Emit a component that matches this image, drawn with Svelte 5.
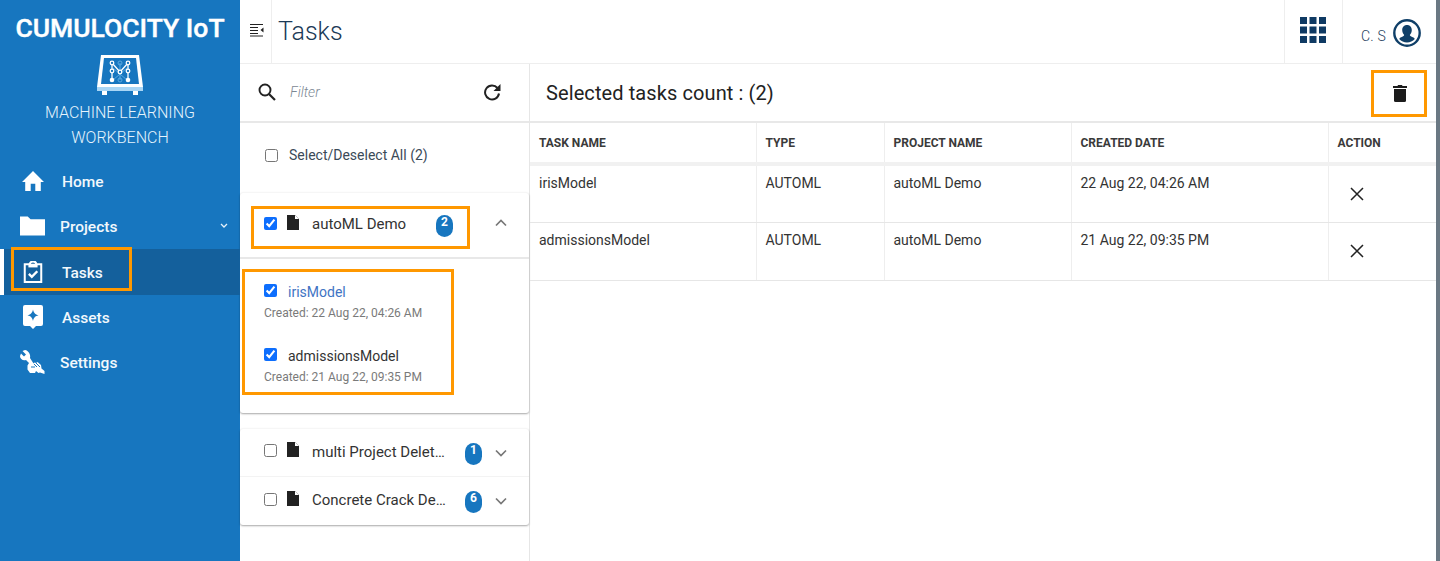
<script>
  const nav = [
    { label: 'Home', icon: 'home' },
    { label: 'Projects', icon: 'folder', caret: true },
    { label: 'Tasks', icon: 'task', active: true },
    { label: 'Assets', icon: 'asset' },
    { label: 'Settings', icon: 'tools' }
  ];
  const rows = [
    { name: 'irisModel', type: 'AUTOML', project: 'autoML Demo', date: '22 Aug 22, 04:26 AM' },
    { name: 'admissionsModel', type: 'AUTOML', project: 'autoML Demo', date: '21 Aug 22, 09:35 PM' }
  ];
</script>

<div class="shell">
  <aside class="side">
    <div class="brand">CUMULOCITY IoT</div>
    <svg class="logo" viewBox="0 0 48 42" width="48" height="42" aria-hidden="true">
      <path d="M5 1h38l4 32H1z" fill="#fff"/>
      <path d="M8 4h32l3 26H5z" fill="#1776bf"/>
      <rect x="1" y="33" width="46" height="4" fill="#a9d6f5"/>
      <rect x="6" y="37" width="5" height="4" fill="#fff"/>
      <rect x="37" y="37" width="5" height="4" fill="#fff"/>
      <g stroke="#5aa9e0" stroke-width="1" fill="none">
        <path d="M24 9v17M17 14l14 12M31 14L17 26"/>
        <circle cx="24" cy="9" r="2"/><circle cx="24" cy="26" r="2"/>
      </g>
      <g stroke="#fff" stroke-width="1.3" fill="#1776bf">
        <path d="M16 9v17M32 9v17M16 9l8 9 8-9" fill="none"/>
        <circle cx="16" cy="9" r="1.8"/><circle cx="32" cy="9" r="1.8"/>
        <circle cx="16" cy="17" r="1.8"/><circle cx="32" cy="17" r="1.8"/>
        <circle cx="24" cy="18" r="1.8"/>
      </g>
      <circle cx="16" cy="26" r="2.3" fill="#fff"/><circle cx="32" cy="26" r="2.3" fill="#fff"/>
    </svg>
    <div class="sub">MACHINE LEARNING<br />WORKBENCH</div>
    <nav class="nav">
      {#each nav as n}
        <div class="nav-item" class:active={n.active} class:narrow={n.icon === 'folder' || n.icon === 'tools'}>
          <span class="nav-icon">
            {#if n.icon === 'home'}
              <svg viewBox="0 0 26 24" width="24" height="22"><path d="M13 1 1 13h3.500v10h6v-8h5v8h6V13H25z" fill="#fff"/></svg>
            {:else if n.icon === 'folder'}
              <svg viewBox="0 0 26 20" width="25" height="20"><path d="M0 0h8l3 3h15v17H0z" fill="#fff"/></svg>
            {:else if n.icon === 'task'}
              <svg class="shift" viewBox="0 0 20 24" width="20" height="22"><path d="M1 3.500h5.500a3.500 3 0 0 1 7 0H19v19.500H1z" fill="none" stroke="#fff" stroke-width="2.200"/><rect x="5" y="3" width="10" height="4" fill="#fff"/><path d="m5.500 14 3.200 3.200 6-6" fill="none" stroke="#fff" stroke-width="2.600"/></svg>
            {:else if n.icon === 'asset'}
              <svg class="shift" viewBox="0 0 20 24" width="20" height="24"><path d="M2 0h16a2 2 0 0 1 2 2v17a2 2 0 0 1-2 2h-5l-3 3-3-3H2a2 2 0 0 1-2-2V2a2 2 0 0 1 2-2z" fill="#fff"/><path d="M10 4.500c.8 3.500 2 4.800 5.500 5.800-3.500 1-4.700 2.300-5.500 5.800-.8-3.500-2-4.800-5.500-5.800 3.500-1 4.700-2.300 5.500-5.800z" fill="#1776bf"/></svg>
            {:else}
              <svg viewBox="0 0 25 24" width="25" height="24"><path d="M5 0 2.500 1 6 4.500 4 6.500 1 3.500 0 6c0 3 3 5 6 4l3 3-1.500 2.500v4L10 23h5l1-2 2.500 2 1.500-.5 4.500 1.500 0-3-3-2.500-.5-3.500-3.500-3-1.500 1-1.500-.5-1 1L10 8c1-3-1.500-7.500-5-8z" fill="#fff"/><path d="M11 17h4M14 14l3 3M18 15l2 2M16 13l2 2" stroke="#1776bf" stroke-width="1" fill="none"/></svg>
            {/if}
          </span>
          <span class="nav-label">{n.label}</span>
          {#if n.caret}
            <svg class="caret" viewBox="0 0 8 6" width="8" height="6"><path d="m1 1 3 3 3-3" fill="none" stroke="#e6f2fb" stroke-width="1.300"/></svg>
          {/if}
        </div>
      {/each}
      <span class="mark mark-nav"></span>
    </nav>
  </aside>

  <div class="main">
    <header class="top">
      <div class="toggle">
        <svg viewBox="0 0 14 14" width="14" height="14"><path d="M0 1.500h13M0 4.500h8M0 7.500h8M0 10.500h8M0 13h13" stroke="#222" stroke-width="1" fill="none"/><path d="m13.500 4.500-3 2.500 3 2.500z" fill="#222"/></svg>
      </div>
      <h1>Tasks</h1>
      <div class="apps">
        <svg viewBox="0 0 26 26" width="26" height="26" fill="#0f3a63">
          <rect width="7" height="7"/><rect x="9.500" width="7" height="7"/><rect x="19" width="7" height="7"/>
          <rect y="9.500" width="7" height="7"/><rect x="9.500" y="9.500" width="7" height="7"/><rect x="19" y="9.500" width="7" height="7"/>
          <rect y="19" width="7" height="7"/><rect x="9.500" y="19" width="7" height="7"/><rect x="19" y="19" width="7" height="7"/>
        </svg>
      </div>
      <div class="user">
        <span>C. S</span>
        <svg viewBox="0 0 28 28" width="28" height="28"><circle cx="14" cy="14" r="12.700" fill="none" stroke="#0f3f68" stroke-width="2.400"/><path d="M14 6c3 0 4.800 2.200 4.800 5 0 2.200-1 4-2 5 .3 1.200 1.500 1.600 3 2.200 1 .4 1.700.9 2 1.800a10.500 10.500 0 0 1-15.600 0c.3-.9 1-1.400 2-1.800 1.500-.6 2.700-1 3-2.200-1-1-2-2.800-2-5 0-2.800 1.800-5 4.800-5z" fill="#0f3f68"/></svg>
      </div>
    </header>

    <div class="content">
      <section class="left">
        <div class="filter">
          <svg viewBox="0 0 18 18" width="18" height="18"><circle cx="7" cy="7" r="5.500" fill="none" stroke="#222" stroke-width="1.900"/><path d="m11 11 6 6" stroke="#222" stroke-width="2.200"/></svg>
          <span class="ph">Filter</span>
          <svg class="refresh" viewBox="0 0 18 18" width="18" height="18"><path d="M14.500 5A7 7 0 1 0 16 10.500" fill="none" stroke="#222" stroke-width="2"/><path d="M17.500 1v7h-7z" fill="#222"/></svg>
        </div>
        <label class="all"><input type="checkbox" /><span>Select/Deselect All (2)</span></label>

        <div class="card first">
          <div class="head open">
            <input type="checkbox" checked />
            <svg class="doc" viewBox="0 0 12 15" width="12" height="15"><path d="M0 0h8l4 4v11H0z" fill="#222"/><path d="M8 0v4h4" fill="#fff"/></svg>
            <span class="proj">autoML Demo</span>
            <span class="badge">2</span>
            <svg class="chev" viewBox="0 0 12 8" width="12" height="8"><path d="m1 6.500 5-5 5 5" fill="none" stroke="#777" stroke-width="1.700"/></svg>
            <span class="mark mark-head"></span>
          </div>
          <div class="kids">
            <div class="kid">
              <div class="kid-top"><input type="checkbox" checked /><span class="link">irisModel</span></div>
              <div class="created">Created: 22 Aug 22, 04:26 AM</div>
            </div>
            <div class="kid">
              <div class="kid-top"><input type="checkbox" checked /><span>admissionsModel</span></div>
              <div class="created">Created: 21 Aug 22, 09:35 PM</div>
            </div>
            <span class="mark mark-kids"></span>
          </div>
        </div>

        <div class="card second">
          <div class="head">
            <input type="checkbox" />
            <svg class="doc" viewBox="0 0 12 15" width="12" height="15"><path d="M0 0h8l4 4v11H0z" fill="#222"/><path d="M8 0v4h4" fill="#fff"/></svg>
            <span class="proj trunc">multi Project Deletion</span>
            <span class="badge">1</span>
            <svg class="chev" viewBox="0 0 12 8" width="12" height="8"><path d="m1 1.500 5 5 5-5" fill="none" stroke="#777" stroke-width="1.700"/></svg>
          </div>
          <div class="head">
            <input type="checkbox" />
            <svg class="doc" viewBox="0 0 12 15" width="12" height="15"><path d="M0 0h8l4 4v11H0z" fill="#222"/><path d="M8 0v4h4" fill="#fff"/></svg>
            <span class="proj trunc">Concrete Crack Detection</span>
            <span class="badge">6</span>
            <svg class="chev" viewBox="0 0 12 8" width="12" height="8"><path d="m1 1.500 5 5 5-5" fill="none" stroke="#777" stroke-width="1.700"/></svg>
          </div>
        </div>
      </section>

      <section class="right">
        <div class="bar">
          <h2>Selected tasks count : (2)</h2>
          <div class="trash">
            <svg viewBox="0 0 14 17" width="14" height="17"><path d="M5 0h4l.5 1H14v2H0V1h4.500z" fill="#1c1c1c"/><path d="M1 4h12v11.500a1.500 1.500 0 0 1-1.500 1.500h-9A1.500 1.500 0 0 1 1 15.500z" fill="#1c1c1c"/></svg>
          </div>
        </div>
        <table>
          <colgroup><col class="c1" /><col class="c2" /><col class="c3" /><col class="c4" /><col /></colgroup>
          <thead>
            <tr><th>TASK NAME</th><th>TYPE</th><th>PROJECT NAME</th><th>CREATED DATE</th><th>ACTION</th></tr>
          </thead>
          <tbody>
            {#each rows as r}
              <tr>
                <td>{r.name}</td><td>{r.type}</td><td>{r.project}</td><td>{r.date}</td>
                <td><svg class="x" viewBox="0 0 14 14" width="14" height="14"><path d="m1 1 12 12M13 1 1 13" stroke="#222" stroke-width="1.500" fill="none"/></svg></td>
              </tr>
            {/each}
          </tbody>
        </table>
      </section>
    </div>
  </div>
  <div class="rail"></div>
</div>

<style>
  :global(body) { margin: 0; background: #fff; }
  .shell {
    display: flex; height: 100vh; overflow: hidden;
    font-family: Roboto, "Liberation Sans", sans-serif; color: #333; position: relative;
  }
  .side { width: 240px; flex: none; background: #1776bf; color: #fff; text-align: center; }
  .brand { font-size: 26.500px; font-weight: 500; line-height: 28px; margin-top: 14px; white-space: nowrap; -webkit-text-stroke: .4px #fff; }
  .logo { display: block; margin: 12px auto 0 96px; }
  .sub { font-size: 16px; font-weight: 300; line-height: 25px; color: #e6f4fd; margin-top: 4px; }
  .nav { position: relative; margin-top: 8px; }
  .nav-item {
    display: flex; align-items: center; height: 45.400px; padding-left: 21px;
    font-size: 15.500px; font-weight: 500; position: relative; color: #f2f8fc;
  }
  .nav-item:nth-child(5) { height: 44.600px; }
  .nav-label { position: relative; top: 1px; }
  .nav-item.active { background: #14609c; box-shadow: inset 4px 0 0 #fff; height: 46px; }
  .nav-icon { width: 41px; flex: none; display: flex; align-items: center; }
  .shift { margin-left: 2px; }
  .nav-item.narrow { padding-left: 20px; }
  .nav-item.narrow .nav-icon { width: 40px; }
  .caret { position: absolute; left: 220px; top: 20px; }
  .mark { position: absolute; border: 3px solid #ff9800; box-sizing: border-box; pointer-events: none; }
  .mark-nav { left: 11px; top: 89px; width: 121px; height: 44px; }

  .main { flex: 1; min-width: 0; display: flex; flex-direction: column; padding-right: 4px; }
  .top { height: 64px; flex: none; display: flex; align-items: stretch; border-bottom: 1px solid #eee; box-sizing: border-box; }
  .toggle { width: 32px; padding-left: 10px; box-sizing: border-box; display: flex; align-items: center; border-right: 1px solid #eee; padding-bottom: 4px; }
  h1 { margin: 0 0 0 6px; font-size: 25px; font-weight: 300; color: #1b3a57; line-height: 63px; flex: 1; }
  .apps { width: 59px; box-sizing: border-box; border-left: 1px solid #eee; border-right: 1px solid #eee; padding: 17px 0 0 15px; }
  .user { width: 93px; padding: 19px 0 0 18px; box-sizing: border-box; display: flex; gap: 7px; }
  .user span { font-size: 14px; font-weight: 300; color: #24415e; margin-top: 9px; letter-spacing: .2px; }

  .content { flex: 1; display: flex; min-height: 0; }
  .left { width: 290px; flex: none; box-sizing: border-box; border-right: 1px solid #e6e6e6; }
  .filter { height: 59px; box-sizing: border-box; display: flex; align-items: center; padding: 0 28px 2px 18px; border-bottom: 2px solid #e8e8e8; }
  .ph { font-style: italic; font-size: 14px; color: #7b8793; margin-left: 14px; flex: 1; font-weight: 300; }
  .all { display: flex; align-items: center; height: 64px; padding: 0 0 0 25px; font-size: 14px; color: #3b4a58; margin-bottom: 6px; }
  .all input { margin: 0 11px 0 0; }
  input[type="checkbox"] { width: 13px; height: 13px; flex: none; accent-color: #0d6efd; }
  .card { background: #fff; border-radius: 3px; box-shadow: 0 1px 2px rgba(0,0,0,.35), 0 -1px 2px rgba(0,0,0,.03); }
  .first { height: 220px; }
  .second { margin-top: 16px; }
  .head { display: flex; align-items: center; height: 48px; padding-left: 24px; position: relative; font-size: 15px; border-bottom: 1px solid #f3f3f3; box-sizing: border-box; }
  .second .head:last-child { border-bottom: 0; }
  .head.open { height: 66px; border-bottom: 2px solid #e8e8e8; }
  .head input { margin: 0 10px 0 0; position: relative; top: -2px; }
  .doc { margin-right: 13px; flex: none; position: relative; top: -3px; }
  .proj { width: 124px; flex: none; color: #333; position: relative; top: -1px; white-space: nowrap; }
  .trunc { width: 135px; overflow: hidden; text-overflow: ellipsis; }
  .badge {
    width: 17px; height: 22px; border-radius: 9px; background: #1776bf; color: #fff; font-size: 12px; font-weight: 700;
    text-align: center; line-height: 15px; flex: none; position: relative; top: 1px; margin-right: 20px;
  }
  .second .badge { margin-left: 18px; margin-right: 0; }
  .second .chev { margin-left: 13px; }
  .chev { flex: none; margin-left: 22px; }
  .open .chev { position: relative; top: -2px; }
  .kids { position: relative; padding-top: 25px; }
  .kid { height: 64px; padding-left: 24px; }
  .kid-top { display: flex; align-items: center; font-size: 14px; height: 15px; color: #333; }
  .kid-top input { margin: 0 11px 0 0; position: relative; top: -1px; }
  .link { color: #3f74c4; }
  .created { font-size: 12px; color: #7a7a7a; margin-top: 7px; line-height: 15px; }
  .mark-head { left: 11px; top: 13px; width: 219px; height: 43px; }
  .mark-kids { left: 2px; top: 10px; width: 212px; height: 126px; }

  .right { flex: 1; min-width: 0; }
  .bar { height: 59px; display: flex; align-items: center; justify-content: space-between; padding: 0 9px 0 16px; box-sizing: border-box; border-bottom: 2px solid #e8e8e8; }
  h2 { margin: 0; font-size: 20px; font-weight: 400; color: #222; letter-spacing: .1px; }
  .trash { width: 56px; height: 47px; border: 3px solid #ff9800; box-sizing: border-box; display: flex; align-items: center; justify-content: center; position: relative; top: 1px; padding-left: 1px; }
  table { width: 906px; border-collapse: collapse; table-layout: fixed; }
  .c1 { width: 226px; } .c2 { width: 128px; } .c3 { width: 187px; } .c4 { width: 257px; }
  th, td { text-align: left; padding: 0 9px; vertical-align: top; border-right: 1px solid #eee; box-sizing: border-box; }
  th:last-child, td:last-child { border-right: 0; }
  th { font-size: 12px; font-weight: 700; height: 39px; line-height: 38px; padding-top: 1px; color: #3a3a3a; border-bottom: 4px solid #f1f1f1; }
  td { font-size: 14px; height: 58px; padding-top: 9px; line-height: 16px; border-bottom: 1px solid #e6e6e6; color: #333; }
  .x { margin: 12px 0 0 12px; display: block; }
  .rail { position: absolute; right: 0; top: 0; bottom: 0; width: 4px; background: #6a7883; }
</style>
